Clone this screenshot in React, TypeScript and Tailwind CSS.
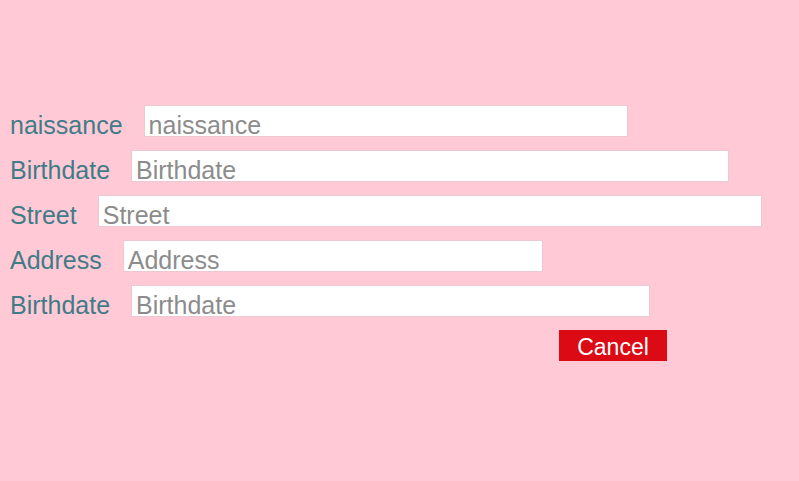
import React from "react";

type Field = {
  label: string;
  width: string;
};

const fields: Field[] = [
  { label: "naissance", width: "w-[484px]" },
  { label: "Birthdate", width: "w-[598px]" },
  { label: "Street", width: "w-[664px]" },
  { label: "Address", width: "w-[420px]" },
  { label: "Birthdate", width: "w-[519px]" },
];

const App: React.FC = () => {
  return (
    <div className="min-h-[481px] w-full bg-[#ffcad6] pt-[105px] pl-[10px] font-['Liberation_Sans',Arial,sans-serif]">
      <div className="flex flex-col gap-[13px]">
        {fields.map((f, i) => (
          <div key={i} className="flex h-[32px] items-baseline">
            <label className="mr-[21px] text-[25px] leading-none text-[#3f7c88]">{f.label}</label>
            <input
              type="text"
              placeholder={f.label}
              className={`${f.width} h-[32px] border border-[#ecc9d2] bg-white pt-[9px] pb-0 px-[4px] text-[25px] text-[#333] outline-none placeholder:text-[#8c8c8c]`}
            />
          </div>
        ))}
      </div>
      <div className="mt-[13px] pl-[549px]">
        <button
          type="button"
          className="h-[31px] w-[108px] bg-[#dc0a14] pt-[3px] text-[23px] leading-none text-white"
        >
          Cancel
        </button>
      </div>
    </div>
  );
};

export default App;
